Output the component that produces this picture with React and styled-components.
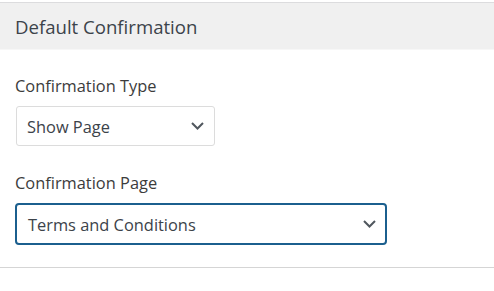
import styled, { createGlobalStyle } from 'styled-components';

const GlobalStyle = createGlobalStyle`
  body {
    margin: 0;
    background: #fff;
    font-family: "Open Sans", "Noto Sans", sans-serif;
  }
`;

const Panel = styled.section`
  margin-top: 2px;
  border-top: 1px solid #dcdcde;
  border-bottom: 1px solid #d5d5d5;
`;

const Header = styled.h2`
  margin: 0;
  height: 46px;
  padding: 0 15px;
  display: flex;
  align-items: center;
  background: #f0f0f0;
  border-bottom: 1px solid #f7f7f7;
  font-size: 18.6px;
  font-weight: 400;
  color: #3c434a;
`;

const Body = styled.div`
  padding: 25px 15px 22px;
  display: flex;
  flex-direction: column;
  gap: 26px;
`;

const Field = styled.div`
  display: flex;
  flex-direction: column;
  gap: 9px;
`;

const Label = styled.label`
  font-size: 16.4px;
  line-height: 22px;
  color: #3c3c3c;
`;

const Select = styled.div`
  box-sizing: border-box;
  width: ${(p) => p.$width}px;
  height: ${(p) => (p.$focused ? 42 : 40)}px;
  margin-left: ${(p) => (p.$focused ? 0 : 1)}px;
  padding: 0 ${(p) => (p.$focused ? 9 : 10)}px 0 ${(p) => (p.$focused ? 11 : 10)}px;
  display: flex;
  align-items: center;
  justify-content: space-between;
  border: ${(p) => (p.$focused ? '2px solid #1b5f8e' : '1px solid #dcdcdc')};
  border-radius: ${(p) => (p.$focused ? 4 : 3)}px;
  font-size: 16.4px;
  color: #3c434a;
`;

const Chevron = () => (
  <svg width="13" height="8" viewBox="0 0 13 8" fill="none">
    <polyline points="1,1 6.5,6.5 12,1" stroke="#50575e" strokeWidth="2" />
  </svg>
);

export default function App() {
  return (
    <>
      <GlobalStyle />
      <Panel>
        <Header>Default Confirmation</Header>
        <Body>
          <Field>
            <Label>Confirmation Type</Label>
            <Select $width={199}>
              Show Page
              <Chevron />
            </Select>
          </Field>
          <Field>
            <Label>Confirmation Page</Label>
            <Select $width={372} $focused>
              Terms and Conditions
              <Chevron />
            </Select>
          </Field>
        </Body>
      </Panel>
    </>
  );
}
